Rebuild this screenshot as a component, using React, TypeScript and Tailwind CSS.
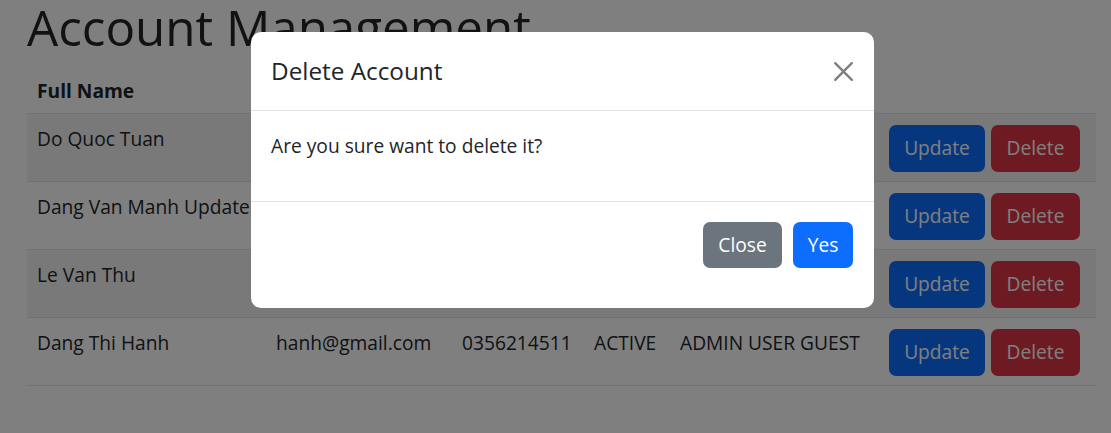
import React from "react";

type Account = {
  name: string;
  email: string;
  phone: string;
  status: string;
  roles: string;
};

// rows 1-3 sit under the open dialog, only the name column shows
const accounts: Account[] = [
  { name: "Do Quoc Tuan", email: "", phone: "", status: "", roles: "" },
  { name: "Dang Van Manh Update", email: "", phone: "", status: "", roles: "" },
  { name: "Le Van Thu", email: "", phone: "", status: "", roles: "" },
  { name: "Dang Thi Hanh", email: "hanh@gmail.com", phone: "0356214511", status: "ACTIVE", roles: "ADMIN USER GUEST" },
];

const cols = "grid grid-cols-[239px_186px_132px_86px_209px_1fr]";

export default function App() {
  return (
    <div
      className="relative h-[433px] w-[1111px] overflow-hidden bg-white text-[19.2px] text-[#212529]"
      style={{ fontFamily: '"Open Sans", "Noto Sans", sans-serif' }}
    >
      {/* Page */}
      <div className="pl-[27px] pr-[15px] pt-px">
        <h1 className="mb-[13px] text-[49.3px] font-medium leading-[52px]">Account Management</h1>

        <div className="w-full">
          {/* Head */}
          <div className={`${cols} h-[48px] border-b border-[#dee2e6] font-bold`}>
            <div className="px-[10px] pt-[11px] leading-[28.8px]">Full Name</div>
          </div>

          {accounts.map((a, i) => (
            <div
              key={a.name}
              className={`${cols} h-[68px] border-b border-[#dee2e6] ${i % 2 === 0 ? "bg-black/5" : ""}`}
            >
              <div className="whitespace-nowrap px-[10px] pt-[11px] leading-[28.8px]">{a.name}</div>
              <div className="px-[10px] pt-[11px] leading-[28.8px]">{a.email}</div>
              <div className="px-[10px] pt-[11px] leading-[28.8px]">{a.phone}</div>
              <div className="px-[10px] pt-[11px] leading-[28.8px]">{a.status}</div>
              <div className="whitespace-nowrap px-[10px] pt-[11px] leading-[28.8px]">{a.roles}</div>
              <div className="flex gap-[6px] px-[10px] pt-[11px]">
                <button className="h-[47px] w-[96px] rounded-[7px] bg-[#0d6efd] text-white">Update</button>
                <button className="h-[47px] w-[89px] rounded-[7px] bg-[#dc3545] text-white">Delete</button>
              </div>
            </div>
          ))}
        </div>
      </div>

      {/* Backdrop */}
      <div className="absolute inset-0 bg-black/50" />

      {/* Modal */}
      <div className="absolute left-[251px] top-[32px] flex h-[276px] w-[623px] flex-col rounded-[10px] bg-white">
        <div className="flex h-[79px] items-center justify-between border-b border-[#dee2e6] px-5">
          <h5 className="text-[24.3px] font-medium leading-[28.8px]">Delete Account</h5>
          <svg width="19" height="19" viewBox="0 0 16 16" className="mr-[1px]">
            <path
              fill="#000"
              fillOpacity="0.5"
              d="M.293.293a1 1 0 0 1 1.414 0L8 6.586 14.293.293a1 1 0 1 1 1.414 1.414L9.414 8l6.293 6.293a1 1 0 0 1-1.414 1.414L8 9.414l-6.293 6.293a1 1 0 0 1-1.414-1.414L6.586 8 .293 1.707a1 1 0 0 1 0-1.414z"
            />
          </svg>
        </div>
        <div className="h-[90px] px-5 pt-[21px] leading-[28.8px]">Are you sure want to delete it?</div>
        <div className="flex flex-1 items-start justify-end gap-[11px] border-t border-[#dee2e6] pr-[21px] pt-5">
          <button className="h-[46px] w-[79px] rounded-[7px] bg-[#6c757d] text-white">Close</button>
          <button className="h-[46px] w-[60px] rounded-[7px] bg-[#0d6efd] text-white">Yes</button>
        </div>
      </div>
    </div>
  );
}
